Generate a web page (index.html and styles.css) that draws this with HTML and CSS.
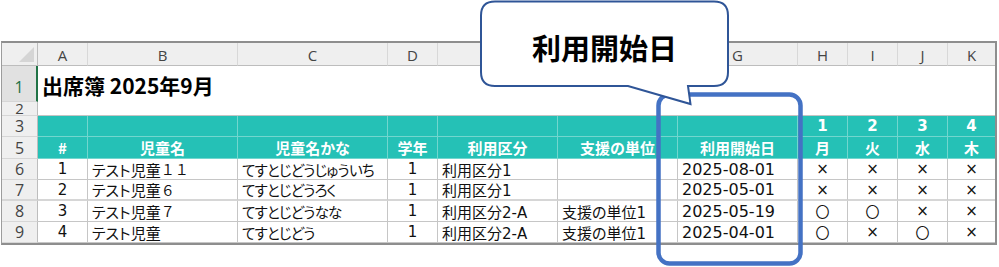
FILE: index.html
```html
<!DOCTYPE html>
<html lang="ja">
<head>
<meta charset="utf-8">
<title>出席簿</title>
<link rel="stylesheet" href="styles.css">
</head>
<body>
<div class="page">
  <div class="sheet">
    <div class="row colhdr">
      <div class="corner"></div>
      <div>A</div><div>B</div><div>C</div><div>D</div><div>E</div><div>F</div>
      <div>G</div><div>H</div><div>I</div><div>J</div><div class="last">K</div>
    </div>
    <div class="row r1">
      <div class="rh sel">1</div>
      <div class="title">出席簿 2025年9月</div>
    </div>
    <div class="row r2">
      <div class="rh">2</div>
      <div class="blank"></div>
    </div>
    <div class="row r3">
      <div class="rh">3</div>
      <div class="t"></div><div class="t"></div><div class="t"></div><div class="t"></div>
      <div class="t"></div><div class="t"></div><div class="t"></div>
      <div class="t num">1</div><div class="t num">2</div><div class="t num">3</div><div class="t num last">4</div>
    </div>
    <div class="row r5">
      <div class="rh">5</div>
      <div class="t">#</div><div class="t">児童名</div><div class="t">児童名かな</div><div class="t">学年</div>
      <div class="t">利用区分</div><div class="t">支援の単位</div><div class="t">利用開始日</div>
      <div class="t">月</div><div class="t">火</div><div class="t">水</div><div class="t last">木</div>
    </div>
    <div class="row data">
      <div class="rh">6</div>
      <div class="d c">1</div><div class="d l">テスト児童<span class="fw">１１</span></div><div class="d l kana">てすとじどうじゅういち</div>
      <div class="d c">1</div><div class="d l">利用区分1</div><div class="d l"></div><div class="d l date">2025-08-01</div>
      <div class="d c mk">×</div><div class="d c mk">×</div><div class="d c mk">×</div><div class="d c mk last">×</div>
    </div>
    <div class="row data thick">
      <div class="rh">7</div>
      <div class="d c">2</div><div class="d l">テスト児童<span class="fw">６</span></div><div class="d l kana">てすとじどうろく</div>
      <div class="d c">1</div><div class="d l">利用区分1</div><div class="d l"></div><div class="d l date">2025-05-01</div>
      <div class="d c mk">×</div><div class="d c mk">×</div><div class="d c mk">×</div><div class="d c mk last">×</div>
    </div>
    <div class="row data">
      <div class="rh">8</div>
      <div class="d c">3</div><div class="d l">テスト児童<span class="fw">７</span></div><div class="d l kana">てすとじどうなな</div>
      <div class="d c">1</div><div class="d l">利用区分2-A</div><div class="d l">支援の単位1</div><div class="d l date">2025-05-19</div>
      <div class="d c ok">〇</div><div class="d c ok">〇</div><div class="d c mk">×</div><div class="d c mk last">×</div>
    </div>
    <div class="row data">
      <div class="rh">9</div>
      <div class="d c">4</div><div class="d l">テスト児童</div><div class="d l kana">てすとじどう</div>
      <div class="d c">1</div><div class="d l">利用区分2-A</div><div class="d l">支援の単位1</div><div class="d l date">2025-04-01</div>
      <div class="d c ok">〇</div><div class="d c mk">×</div><div class="d c ok">〇</div><div class="d c mk last">×</div>
    </div>
  </div>

  <svg class="overlay" width="999" height="267" viewBox="0 0 999 267">
    <rect x="658.5" y="94.5" width="142" height="169" rx="11" fill="none" stroke="#4472c4" stroke-width="4.5"/>
    <path d="M495 1.5 H714 Q728 1.5 728 15.5 V72 Q728 86 714 86 H688 L690.5 104 L628 86 H495 Q481 86 481 72 V15.5 Q481 1.5 495 1.5 Z" fill="#fff" stroke="#2f5597" stroke-width="2" stroke-linejoin="miter"/>
  </svg>
  <div class="callout">利用開始日</div>
</div>
</body>
</html>
```

FILE: styles.css
```css
html, body {
  margin: 0;
  padding: 0;
  background: #fff;
}

.page {
  position: relative;
  width: 999px;
  height: 267px;
  overflow: hidden;
  padding: 41px 0 0 1px;
  box-sizing: border-box;
}

.sheet {
  width: 996px;
  border: 2px solid #8e8e8e;
  border-left: 1px solid #9c9c9c;
  box-sizing: border-box;
  font-family: "DejaVu Sans", "Noto Sans CJK JP", sans-serif;
  font-feature-settings: "palt";
}

.row {
  display: grid;
  grid-template-columns: 36px 50px 150px 150px 50px 120px 120px 120px 50px 50px 50px 47px;
}

.row > div {
  box-sizing: border-box;
  display: flex;
  align-items: center;
  overflow: hidden;
  white-space: nowrap;
}

/* column letters */
.colhdr {
  height: 23px;
}
.colhdr > div {
  background: #efefef;
  border-right: 1px solid #d8d8d8;
  border-bottom: 1px solid #bdbdbd;
  justify-content: center;
  font-family: "Open Sans", "Noto Sans", sans-serif;
  font-size: 15px;
  color: #444;
  padding-top: 1px;
}
.colhdr > .corner {
  position: relative;
  border-right: 1px solid #bdbdbd;
}
.corner::after {
  content: "";
  position: absolute;
  right: 3px;
  bottom: 3px;
  width: 15px;
  height: 15px;
  background: #d5d5d5;
  clip-path: polygon(100% 0, 100% 100%, 0 100%);
}

/* row headers */
.rh {
  background: #efefef;
  border-right: 1px solid #bdbdbd;
  border-bottom: 1px solid #d6d6d6;
  justify-content: center;
  font-family: "Open Sans", "Noto Sans", sans-serif;
  font-size: 16px;
  color: #444;
}
.rh.sel {
  background: #e1e1e1;
  color: #217346;
  border-right: 2px solid #217346;
}

.r1 { height: 36px; }
.r1 > div { align-items: flex-end; padding-bottom: 3px; }
.r1 > .title { padding-bottom: 2px; }
.r2 { height: 14px; }
.r2 > .rh { align-items: flex-end; font-size: 15px; line-height: 14px; }
.r3 { height: 21px; }
.r5 { height: 22px; }
.data { height: 21px; }

.title {
  grid-column: 2 / -1;
  padding-left: 4px;
  font-family: "Noto Sans CJK JP", sans-serif;
  font-weight: 700;
  font-size: 21px;
  color: #000;
}
.blank {
  grid-column: 2 / -1;
  border-bottom: 1px solid #c4c4c4;
}

/* teal header */
.t {
  background: #25c1b6;
  color: #fff;
  font-weight: 700;
  font-size: 15px;
  justify-content: center;
  border-right: 1px solid #72d6ce;
  border-bottom: 1px solid #72d6ce;
  font-family: "Noto Sans CJK JP", sans-serif;
}
.t.num {
  font-family: "DejaVu Sans", sans-serif;
  font-size: 15px;
}
.last { border-right: none !important; }

/* data */
.d {
  border-right: 1px solid #c6c6c6;
  border-bottom: 1px solid #c6c6c6;
  font-size: 15px;
  color: #111;
}
.thick > div { border-bottom: 2px solid #d6d6d6; }
.c { justify-content: center; }
.l { padding-left: 4px; }
.fw {
  font-feature-settings: normal;
  font-size: 14px;
}
.kana {
  font-size: 14.5px;
  letter-spacing: -0.8px;
}
.date { font-size: 16px; }
.mk { font-size: 15px; }
.ok { font-size: 14px; font-family: "Noto Sans CJK JP", sans-serif; }

/* overlays */
.overlay {
  position: absolute;
  left: 0;
  top: 0;
  pointer-events: none;
}
.callout {
  position: absolute;
  left: 481px;
  top: 1px;
  width: 247px;
  height: 85px;
  padding-top: 6px;
  box-sizing: border-box;
  display: flex;
  align-items: center;
  justify-content: center;
  font-family: "Noto Sans CJK JP", sans-serif;
  font-weight: 700;
  font-size: 29px;
  color: #000;
}
```
